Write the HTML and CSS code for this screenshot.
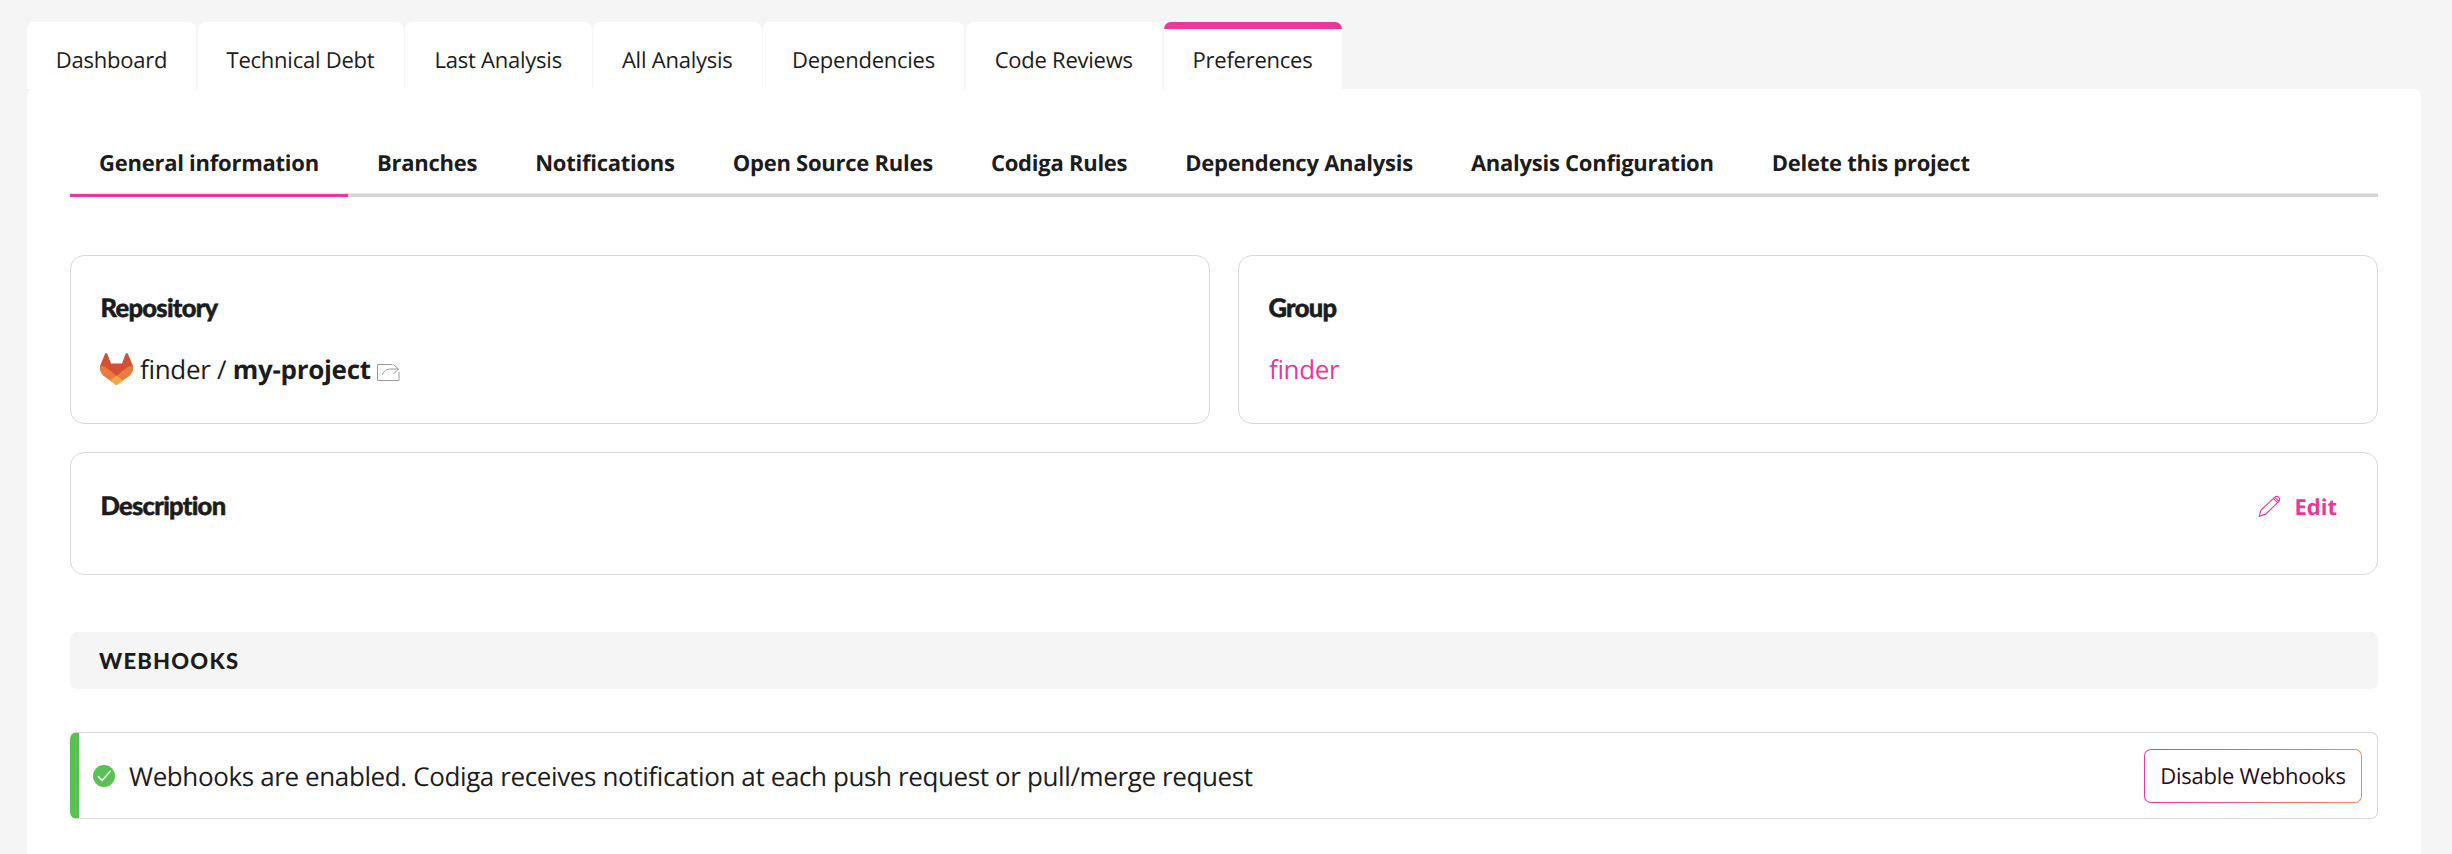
FILE: index.html
```html
<!DOCTYPE html>
<html lang="en">
<head>
<meta charset="utf-8">
<title>Preferences</title>
<link rel="stylesheet" href="styles.css">
</head>
<body>
<nav class="tabs">
  <a class="tab tab-dashboard">Dashboard</a>
  <a class="tab tab-debt">Technical Debt</a>
  <a class="tab tab-last">Last Analysis</a>
  <a class="tab tab-all">All Analysis</a>
  <a class="tab tab-deps">Dependencies</a>
  <a class="tab tab-reviews">Code Reviews</a>
  <a class="tab tab-prefs active">Preferences</a>
</nav>
<main class="panel">
  <nav class="subtabs">
    <a class="subtab active">General information</a>
    <a class="subtab">Branches</a>
    <a class="subtab">Notifications</a>
    <a class="subtab">Open Source Rules</a>
    <a class="subtab">Codiga Rules</a>
    <a class="subtab">Dependency Analysis</a>
    <a class="subtab">Analysis Configuration</a>
    <a class="subtab">Delete this project</a>
  </nav>
  <div class="cards">
    <section class="card">
      <h2 class="heading">Repository</h2>
      <p class="value">
        <svg class="logo" viewBox="0 0 33 32">
          <path fill="#d35035" d="M0 13 5 1q1-2 2.400 0L11 10.500H22L25.600 1q1.400-2 2.400 0L33 13v4L16.500 30 0 17Z"/>
          <path fill="#ec7a3d" d="M.8 12.200Q6 13.500 11 18.200L16.500 23 22 18.200Q27 13.500 32.200 12.200 34.500 18 30 22.500L16.500 32 3 22.500Q-1.500 18 .8 12.200Z"/>
          <path fill="#f1a842" d="m16.500 22.500 6.500 5-5.500 4.200q-1 .6-2 0L10 27.500Z"/>
        </svg>
        <span class="repo">finder / <strong>my-project</strong></span>
        <svg class="share" viewBox="0 0 23 19" fill="none" stroke="#999">
          <path d="M15.500 1.500H1Q.5 1.500.5 2v15q0 .5.500.5h20.500q.5 0 .5-.5V9"/>
          <path d="M5.500 12C6.500 8 9.500 6 14 6h7.500M16.500 1.500 21.500 6l-5 5"/>
        </svg>
      </p>
    </section>
    <section class="card">
      <h2 class="heading">Group</h2>
      <p class="value"><a class="link">finder</a></p>
    </section>
  </div>
  <section class="card description">
    <h2 class="heading">Description</h2>
    <a class="edit">
      <svg class="pencil" viewBox="0 0 24 24" fill="none" stroke="#e63a9b" stroke-width="1.200">
        <path d="m1.300 22.300 1.800-6.500L17.500 2.200q2-1.600 4 .1t.6 4.200L8 20Z"/>
        <path d="M16 3.700l4.600 4.300M17.800 2.700 21.600 6.300"/>
      </svg>
      <span>Edit</span>
    </a>
  </section>
  <h3 class="section-title">WEBHOOKS</h3>
  <section class="alert">
    <svg class="check" viewBox="0 0 22 22"><circle cx="11" cy="11" r="11" fill="#59c255"/><path d="m5.300 11.500 3.900 4 8-9.300" fill="none" stroke="#fff" stroke-width="1.400" stroke-linecap="round" stroke-linejoin="round"/></svg>
    <span class="message">Webhooks are enabled. Codiga receives notification at each push request or pull/merge request</span>
    <button class="button">Disable Webhooks</button>
  </section>
</main>
</body>
</html>
```
FILE: styles.css
```css
* { box-sizing: border-box; }
body {
  margin: 0;
  height: 854px;
  overflow: hidden;
  padding: 22px 31px 0 27px;
  background: #f5f5f5;
  color: #1c1c1c;
  font-family: "Open Sans", sans-serif;
  text-rendering: geometricPrecision;
}
.tabs { display: flex; height: 67px; gap: 1.500px; }
.tab {
  display: flex;
  align-items: center;
  justify-content: center;
  padding-top: 9px;
  border-radius: 7px 7px 0 0;
  background: #fff;
  font-size: 22px;
  line-height: 30px;
  letter-spacing: -0.240px;
  white-space: nowrap;
}
.tab-dashboard { width: 169px; }
.tab-debt { width: 206px; }
.tab-last { width: 186.500px; }
.tab-all { width: 168.500px; }
.tab-deps { width: 201px; }
.tab-reviews { width: 196.500px; }
.tab-prefs { width: 178px; }
.tab.active { border-top: 7px solid #e63a9b; padding-top: 2px; }
.panel {
  height: 765px;
  padding: 45px 43px 0;
  border-radius: 7px 7px 0 0;
  background: #fff;
}
.subtabs { display: flex; height: 63px; box-shadow: inset 0 -3px #d5d5d5, inset 0 -4px #e6e6e6; }
.subtab {
  padding: 14px 29px 0;
  font-size: 22px;
  font-weight: 700;
  line-height: 30px;
  letter-spacing: -0.250px;
  white-space: nowrap;
}
.subtab.active { border-bottom: 3px solid #e63a9b; }
.cards { display: grid; grid-template-columns: 1fr 1fr; gap: 28px; margin-top: 58px; }
.card {
  height: 169px;
  padding: 36px 30px 0;
  border: 1px solid #d8d8d8;
  border-radius: 14px;
}
.heading {
  margin: 0 0 0 -0.500px;
  font-family: Lato, sans-serif;
  font-size: 25.500px;
  font-weight: 900;
  line-height: 32px;
  letter-spacing: -0.700px;
  -webkit-text-stroke: 0.500px #1c1c1c;
}
.value {
  display: flex;
  align-items: center;
  margin: 27px 0 0;
  font-size: 26px;
  line-height: 36px;
  letter-spacing: -0.370px;
}
.repo { letter-spacing: -0.300px; }
.logo { width: 33px; height: 32px; margin: 0 7px 0 -1px; }
.share { width: 23px; height: 19px; margin: 6px 0 0 6px; }
.link { color: #e63a9b; }
.description {
  display: flex;
  justify-content: space-between;
  height: 123px;
  padding-top: 37px;
  margin-top: 28px;
}
.edit {
  display: flex;
  align-items: flex-start;
  margin-right: 10px;
  color: #e63a9b;
  font-size: 22px;
  font-weight: 700;
  line-height: 34px;
}
.pencil { width: 23px; height: 23px; margin: 5px 13px 0 0; }
.section-title {
  height: 57px;
  margin: 57px 0 0;
  padding-left: 29px;
  border-radius: 7px;
  background: #f5f5f5;
  font-family: Lato, sans-serif;
  font-size: 22px;
  font-weight: 900;
  line-height: 58px;
  letter-spacing: 1.200px;
}
.alert {
  display: flex;
  align-items: center;
  height: 87px;
  margin-top: 43px;
  padding: 0 15px 0 14px;
  border: 1px solid #d8d8d8;
  border-left: 9px solid #59c255;
  border-radius: 7px;
}
.check { width: 22px; height: 22px; }
.message { margin-left: 14px; font-size: 26px; line-height: 36px; letter-spacing: -0.380px; }
.button {
  width: 218px;
  height: 54px;
  margin-left: auto;
  padding: 0;
  border: 1px solid transparent;
  border-radius: 7px;
  background: linear-gradient(#fff, #fff) padding-box, linear-gradient(90deg, #e63a9b, #f09045) border-box;
  color: #270c25;
  font: 22px "Open Sans", sans-serif;
  letter-spacing: -0.260px;
  text-rendering: geometricPrecision;
}
```
